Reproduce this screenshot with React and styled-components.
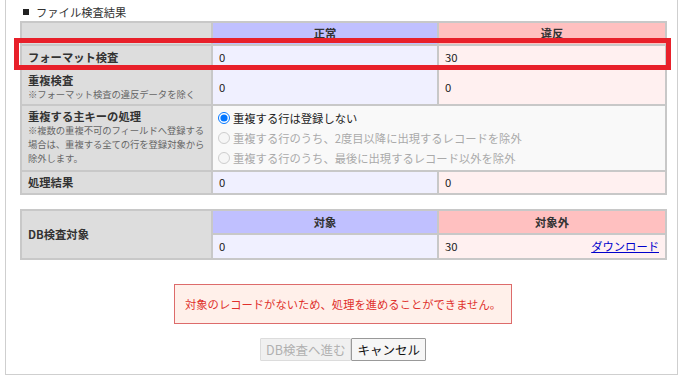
import React from "react";
import styled, { createGlobalStyle } from "styled-components";

const Global = createGlobalStyle`
  html, body { margin: 0; padding: 0; background: #fff; }
  body { font-family: "Noto Sans CJK JP", "Noto Sans", sans-serif; color: #222; }
`;

const Frame = styled.div`
  box-sizing: border-box;
  margin-left: 5px;
  width: 673px;
  height: 375px;
  border: 1px solid #cfcfcf;
  border-top: none;
  padding: 2px 11px 0 14px;
  display: flex;
  flex-direction: column;
`;

const Title = styled.div`
  font-size: 11.3px;
  line-height: 16px;
  color: #333;
  height: 19px;
  display: flex;
  align-items: center;
  gap: 3px;
  &::before {
    content: "";
    width: 6px;
    height: 6px;
    background: #222;
    margin: 0 4px 0 3px;
  }
`;

const TableWrap = styled.div`
  position: relative;
  margin-top: ${(p) => p.$mt || 0}px;
`;

const Table = styled.table`
  width: 645px;
  border-collapse: collapse;
  table-layout: fixed;
  font-size: 11.3px;
  border: 2px solid #c8c8c8;
`;

const Cell = styled.td`
  border: 2px solid #c8c8c8;
  padding: ${(p) => p.$pad || "3px 6px"};
  line-height: ${(p) => p.$lh || 16}px;
  vertical-align: middle;
  white-space: nowrap;
  text-align: ${(p) => (p.$center ? "center" : "left")};
  background: ${(p) =>
    p.$kind === "label"
      ? "#dddddd"
      : p.$kind === "okHead"
      ? "#c0c0ff"
      : p.$kind === "ngHead"
      ? "#ffc0c0"
      : p.$kind === "ok"
      ? "#f0f0ff"
      : p.$kind === "ng"
      ? "#fff0f0"
      : "#f9f9f9"};
  font-weight: ${(p) => (p.$bold ? 700 : 400)};
  color: ${(p) => (p.$bold ? "#333" : "#222")};
`;

const LabelTitle = styled.div`
  font-weight: 700;
  color: #333;
  line-height: 15px;
`;

const Note = styled.div`
  font-size: 9.4px;
  font-weight: 400;
  color: #666;
  line-height: 13.7px;
  white-space: nowrap;
  letter-spacing: -0.1px;
`;

const RadioLine = styled.label`
  display: flex;
  align-items: center;
  height: 20px;
  color: ${(p) => (p.$disabled ? "#aaa" : "#222")};
  input {
    margin: 0 3px 0 5px;
    width: 12px;
    height: 12px;
  }
`;

const Split = styled.div`
  display: flex;
  justify-content: space-between;
  align-items: center;
`;

const Link = styled.a`
  color: #0000cc;
  text-decoration: underline;
  cursor: pointer;
`;

const Highlight = styled.div`
  position: absolute;
  left: -6px;
  top: 17px;
  width: 657px;
  height: 32px;
  box-sizing: border-box;
  border: 5px solid #e8202a;
  pointer-events: none;
`;

const Center = styled.div`
  display: flex;
  justify-content: center;
  margin-top: ${(p) => p.$mt}px;
`;

const ErrorBox = styled.div`
  box-sizing: border-box;
  width: 338px;
  height: 40px;
  border: 1px solid #dd6b6b;
  background: #fff0ea;
  color: #e0302c;
  font-size: 11.3px;
  display: flex;
  align-items: center;
  padding-left: 10px;
`;

const Button = styled.button`
  box-sizing: border-box;
  height: 23px;
  padding: 0 5px;
  font-family: "Noto Sans CJK JP", sans-serif;
  font-size: 12.5px;
  line-height: 21px;
  border: 1px solid ${(p) => (p.disabled ? "#dcdcdc" : "#999")};
  background: ${(p) => (p.disabled ? "#f0f0f0" : "#f6f6f6")};
  color: ${(p) => (p.disabled ? "#b0b0b0" : "#111")};
  border-radius: 1px;
  margin: 0;
`;

export default function App() {
  return (
    <>
      <Global />
      <Frame>
        <Title>ファイル検査結果</Title>
        <TableWrap>
          <Table>
            <colgroup>
              <col style={{ width: 191 }} />
              <col style={{ width: 226 }} />
              <col style={{ width: 228 }} />
            </colgroup>
            <tbody>
              <tr>
                <Cell $kind="label" $pad="2px 6px" $lh={17}></Cell>
                <Cell $kind="okHead" $center $bold $pad="2px 6px" $lh={17}>正常</Cell>
                <Cell $kind="ngHead" $center $bold $pad="2px 6px" $lh={17}>違反</Cell>
              </tr>
              <tr>
                <Cell $kind="label" $bold $lh={16}>フォーマット検査</Cell>
                <Cell $kind="ok">0</Cell>
                <Cell $kind="ng">30</Cell>
              </tr>
              <tr>
                <Cell $kind="label" $pad="3px 6px 2px">
                  <LabelTitle>重複検査</LabelTitle>
                  <Note>※フォーマット検査の違反データを除く</Note>
                </Cell>
                <Cell $kind="ok">0</Cell>
                <Cell $kind="ng">0</Cell>
              </tr>
              <tr>
                <Cell $kind="label" $pad="2px 6px 3px">
                  <LabelTitle>重複する主キーの処理</LabelTitle>
                  <Note>
                    ※複数の重複不可のフィールドへ登録する
                    <br />
                    場合は、重複する全ての行を登録対象から
                    <br />
                    除外します。
                  </Note>
                </Cell>
                <Cell $kind="plain" colSpan={2} $pad="2px 6px 2px 0">
                  <RadioLine>
                    <input type="radio" name="dup" defaultChecked />
                    重複する行は登録しない
                  </RadioLine>
                  <RadioLine $disabled>
                    <input type="radio" name="dup" disabled />
                    重複する行のうち、2度目以降に出現するレコードを除外
                  </RadioLine>
                  <RadioLine $disabled>
                    <input type="radio" name="dup" disabled />
                    重複する行のうち、最後に出現するレコード以外を除外
                  </RadioLine>
                </Cell>
              </tr>
              <tr>
                <Cell $kind="label" $bold $pad="2px 6px 3px">処理結果</Cell>
                <Cell $kind="ok" $pad="2px 6px 3px">0</Cell>
                <Cell $kind="ng" $pad="2px 6px 3px">0</Cell>
              </tr>
            </tbody>
          </Table>
          <Highlight />
        </TableWrap>
        <TableWrap $mt={14}>
          <Table>
            <colgroup>
              <col style={{ width: 191 }} />
              <col style={{ width: 226 }} />
              <col style={{ width: 228 }} />
            </colgroup>
            <tbody>
              <tr>
                <Cell $kind="label" $bold rowSpan={2}>DB検査対象</Cell>
                <Cell $kind="okHead" $center $bold $pad="3px 6px">対象</Cell>
                <Cell $kind="ngHead" $center $bold $pad="3px 6px">対象外</Cell>
              </tr>
              <tr>
                <Cell $kind="ok" $pad="3px 6px 4px">0</Cell>
                <Cell $kind="ng" $pad="3px 6px 4px">
                  <Split>
                    <span>30</span>
                    <Link>ダウンロード</Link>
                  </Split>
                </Cell>
              </tr>
            </tbody>
          </Table>
        </TableWrap>
        <Center $mt={24}>
          <ErrorBox>対象のレコードがないため、処理を進めることができません。</ErrorBox>
        </Center>
        <Center $mt={14}>
          <Button disabled>DB検査へ進む</Button>
          <Button>キャンセル</Button>
        </Center>
      </Frame>
    </>
  );
}
